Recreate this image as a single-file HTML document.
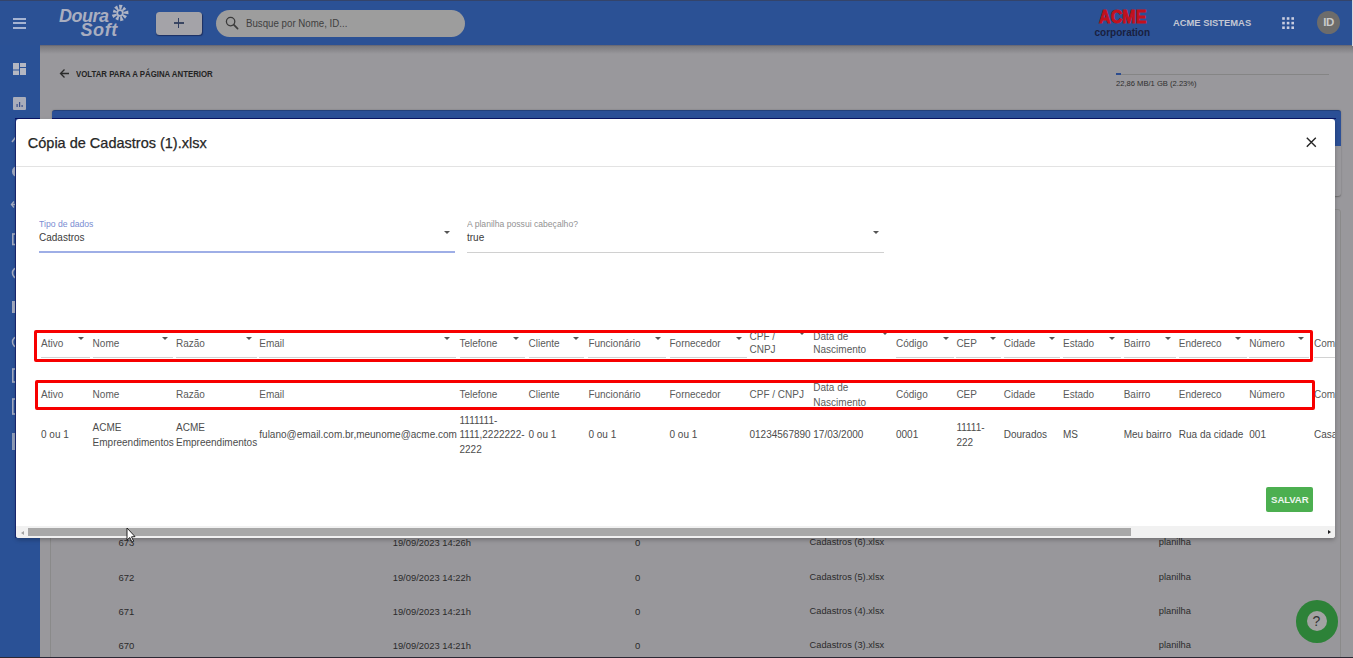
<!DOCTYPE html>
<html><head><meta charset="utf-8"><style>
*{margin:0;padding:0;box-sizing:border-box}
html,body{width:1353px;height:658px;overflow:hidden;background:#99989c;font-family:"Liberation Sans",sans-serif}
.t{position:absolute;white-space:nowrap}
#topbar{position:absolute;left:0;top:0;width:1353px;height:45px;background:#2b5195}
#topline{position:absolute;left:0;top:0;width:1353px;height:1px;background:#34446a}
#sidebar{position:absolute;left:0;top:45px;width:40px;height:613px;background:#2a5196}
#content{position:absolute;left:40px;top:45px;width:1313px;height:613px;background:#99989c}
#topshadow{position:absolute;left:40px;top:45px;width:1313px;height:9px;background:linear-gradient(#5f6070,#7b7a7e 15%,#99989c)}
.hb{position:absolute;left:13px;width:13px;height:2px;background:#a6b4d2}
.logo{font-weight:700;font-style:italic;color:#a9aec0;letter-spacing:-0.5px}
#plusbtn{position:absolute;left:156px;top:12px;width:46px;height:23px;background:#a4a3a8;border-radius:3.5px;box-shadow:0.5px 1px 1px #1c2f62}
.pl1{position:absolute;left:17.8px;top:10.3px;width:9.8px;height:1.5px;background:#3a4662}
.pl2{position:absolute;left:21.9px;top:5.9px;width:1.2px;height:10.5px;background:#2f3d60}
#search{position:absolute;left:216px;top:9.5px;width:248.5px;height:27.5px;background:#9d9d9d;border-radius:14px}
#acme{font-size:18px;line-height:20px;font-weight:700;color:#c3101c;transform:scaleX(0.896);transform-origin:left top;letter-spacing:0px;-webkit-text-stroke:0.9px #c3101c}
#avatar{position:absolute;left:1317px;top:11px;width:23.2px;height:23.2px;border-radius:50%;background:#6d6c6b;color:#cacaca;font-weight:700;font-size:11.5px;line-height:23.5px;text-align:center;letter-spacing:-0.3px}
#card1{position:absolute;left:51.5px;top:109.5px;width:1289px;height:86px;background:#99989c;border-radius:3px;box-shadow:0 0.5px 1.5px #6a6a6a}
#card1h{position:absolute;left:51.5px;top:109.5px;width:1289px;height:36px;background:#2b4f96;border-radius:3px 3px 0 0;border-top:1px solid #23407a}
#card2{position:absolute;left:49.5px;top:208.5px;width:1291px;height:460px;background:#98979b;border:1px solid #8a8a8a;border-radius:3px}
#help{position:absolute;left:1295.5px;top:600px;width:42.5px;height:42.5px;border-radius:50%;background:#2d8238}
#helpin{position:absolute;left:11px;top:11px;width:20px;height:20px;border-radius:50%;background:#a3a3a3;color:#333;font-size:14px;line-height:20px;text-align:center}
#modal{position:absolute;left:16px;top:119px;width:1319px;height:419px;background:#fff;border-radius:3px;overflow:hidden;box-shadow:0 2px 4px rgba(0,0,0,0.25)}
#mhead{position:absolute;left:0;top:46.5px;width:1319px;height:1px;background:#e3e3e3}
.arr{position:absolute;width:0;height:0;border-left:3.2px solid transparent;border-right:3.2px solid transparent;border-top:3.4px solid #555}
.rbox{position:absolute;border:3px solid #f70000;border-radius:2px}
#salvar{position:absolute;left:1250.3px;top:368.2px;width:47px;height:25.3px;background:#4caf50;border-radius:2px;color:#eef6ee;font-weight:700;font-size:9.6px;line-height:25.5px;text-align:center;letter-spacing:-0.1px}
#botline{position:absolute;left:0;top:657px;width:1353px;height:1px;background:#2b2733}
#rstrip{position:absolute;left:1351.5px;top:0;width:2px;height:45.5px;background:#d8d8e0}
#track{position:absolute;left:0;top:407px;width:1319px;height:12.5px;background:#f1f1f1}
#thumb{position:absolute;left:12px;top:408.5px;width:1103px;height:8.5px;background:#a8a8a8}
</style></head><body>
<div id="topbar"></div><div id="topline"></div><div id="sidebar"></div><div id="content"></div><div id="topshadow"></div><div class="hb" style="top:17.6px"></div><div class="hb" style="top:22.2px"></div><div class="hb" style="top:26.8px"></div><svg style="position:absolute;left:13px;top:63px" width="13" height="12" viewBox="0 0 13 12">
<rect x="0" y="0" width="6" height="6.5" fill="#b4b7c2"/><rect x="7" y="0" width="6" height="4" fill="#b4b7c2"/>
<rect x="0" y="7.5" width="6" height="4.5" fill="#b4b7c2"/><rect x="7" y="5" width="6" height="7" fill="#b4b7c2"/></svg><svg style="position:absolute;left:13px;top:97px" width="13" height="13" viewBox="0 0 13 13">
<rect x="0" y="0" width="13" height="13" rx="1" fill="#a9adba"/><rect x="3.5" y="7" width="1.2" height="3" fill="#3a4f8a"/>
<rect x="6" y="5" width="1.2" height="5" fill="#3a4f8a"/><rect x="8.5" y="8" width="1.2" height="2" fill="#3a4f8a"/></svg><svg style="position:absolute;left:0;top:120px" width="20" height="340" viewBox="0 120 20 340">
<path d="M12 142L15.5 137.5" stroke="#a3abc0" stroke-width="1.6"/>
<circle cx="17.5" cy="171.5" r="5.5" fill="#a3abc0"/>
<path d="M11.5 204.5H16M14 201.5L11.5 204.5L14 207.5" fill="none" stroke="#a3abc0" stroke-width="1.4"/>
<rect x="12.8" y="234" width="8" height="10.5" fill="none" stroke="#a3abc0" stroke-width="1.6"/>
<circle cx="18" cy="273" r="5.5" fill="none" stroke="#a3abc0" stroke-width="1.6"/>
<rect x="12" y="301" width="8" height="12" fill="#a3abc0"/>
<circle cx="18" cy="342" r="5.5" fill="none" stroke="#a3abc0" stroke-width="1.5"/>
<rect x="12.8" y="369" width="8" height="13" fill="none" stroke="#a3abc0" stroke-width="1.6"/>
<rect x="12.8" y="399" width="8" height="15" fill="none" stroke="#a3abc0" stroke-width="1.6"/>
<rect x="12" y="433" width="8" height="17" fill="#a3abc0" opacity="0.85"/>
</svg><div class="t logo" style="left:59px;top:6px;font-size:18px;line-height:20px">Doura</div><div class="t logo" style="left:80.5px;top:19.5px;font-size:18px;line-height:20px;letter-spacing:0.6px">Soft</div><svg style="position:absolute;left:109.5px;top:3.1px" width="20" height="20" viewBox="0 0 20 20"><g fill="#b0b5c4"><path d="M9.60 6.42L8.99 1.66L12.64 2.03L11.10 6.57Z"/><path d="M12.00 7.00L14.04 3.80L16.30 6.12L13.05 8.08Z"/><path d="M13.46 8.99L18.23 7.50L18.51 11.25L13.57 10.49Z"/><path d="M13.30 11.45L16.99 12.98L15.05 15.68L12.42 12.67Z"/><path d="M11.60 13.23L13.71 17.31L10.24 18.20L10.14 13.60Z"/><path d="M9.15 13.50L8.27 17.40L5.29 15.96L7.80 12.85Z"/><path d="M7.10 12.13L3.28 15.04L1.77 11.70L6.48 10.76Z"/><path d="M6.41 9.77L2.81 9.61L3.66 6.58L6.81 8.32Z"/><path d="M7.40 7.51L4.16 4.53L7.05 2.57L8.64 6.67Z"/></g><circle cx="10" cy="10" r="2.8" fill="none" stroke="#b0b5c4" stroke-width="1.8"/></svg><div id="plusbtn"><div class="pl1"></div><div class="pl2"></div></div><div id="search"></div><svg style="position:absolute;left:225px;top:16px" width="14" height="14" viewBox="0 0 14 14"><circle cx="5.6" cy="5.6" r="4.2" fill="none" stroke="#3a3a3a" stroke-width="1.3"/><line x1="8.7" y1="8.7" x2="12.6" y2="12.6" stroke="#3d3d3d" stroke-width="1.7" stroke-linecap="round"/></svg><div class="t" style="left:245.5px;top:16.55px;font-size:10px;line-height:14.5px;color:#404040;font-weight:400;transform:scaleX(0.97);transform-origin:0 0;">Busque por Nome, ID...</div>
<div class="t" id="acme" style="left:1099px;top:6.9px">ACME</div><div class="t" style="left:1094.5px;top:27.2px;font-size:10px;line-height:12px;font-weight:700;color:#19203f">corporation</div><div class="t" style="left:1173px;top:16.08px;font-size:9.4px;line-height:13.63px;color:#c3c7d3;font-weight:700;">ACME SISTEMAS</div>
<svg style="position:absolute;left:1282px;top:17px" width="12" height="12" viewBox="0 0 12 12"><rect x="0.2" y="0.2" width="2.6" height="2.6" fill="#c9cde0"/><rect x="0.2" y="4.8" width="2.6" height="2.6" fill="#c9cde0"/><rect x="0.2" y="9.399999999999999" width="2.6" height="2.6" fill="#c9cde0"/><rect x="4.8" y="0.2" width="2.6" height="2.6" fill="#c9cde0"/><rect x="4.8" y="4.8" width="2.6" height="2.6" fill="#c9cde0"/><rect x="4.8" y="9.399999999999999" width="2.6" height="2.6" fill="#c9cde0"/><rect x="9.399999999999999" y="0.2" width="2.6" height="2.6" fill="#c9cde0"/><rect x="9.399999999999999" y="4.8" width="2.6" height="2.6" fill="#c9cde0"/><rect x="9.399999999999999" y="9.399999999999999" width="2.6" height="2.6" fill="#c9cde0"/></svg><div id="avatar">ID</div><div class="t" style="left:76px;top:67.07px;font-size:9.6px;line-height:13.92px;color:#242424;font-weight:700;transform:scaleX(0.815);transform-origin:0 0;">VOLTAR PARA A PÁGINA ANTERIOR</div>
<svg style="position:absolute;left:59px;top:68px" width="11" height="11" viewBox="0 0 11 11"><path d="M10 5.5H1.8M5.5 1.5L1.5 5.5L5.5 9.5" fill="none" stroke="#2a2a2a" stroke-width="1.3"/></svg><div style="position:absolute;left:1116px;top:73.5px;width:213px;height:1.5px;background:#858585"></div><div style="position:absolute;left:1116px;top:73.3px;width:4.7px;height:2px;background:#2c4c8e"></div><div class="t" style="left:1116px;top:78.48px;font-size:7.6px;line-height:11.02px;color:#2e2e2e;font-weight:400;">22,86 MB/1 GB (2.23%)</div>
<div id="card1"></div><div id="card1h"></div><div id="card2"></div><div class="t" style="left:118.5px;top:536.17px;font-size:9.5px;line-height:13.775px;color:#2b2b2b;font-weight:400;">673</div>
<div class="t" style="left:392.7px;top:536.28px;font-size:9.4px;line-height:13.63px;color:#2b2b2b;font-weight:400;">19/09/2023 14:26h</div>
<div class="t" style="left:635px;top:536.17px;font-size:9.5px;line-height:13.775px;color:#2b2b2b;font-weight:400;">0</div>
<div class="t" style="left:809.6px;top:536.44px;font-size:9.25px;line-height:13.4125px;color:#2b2b2b;font-weight:400;">Cadastros (6).xlsx</div>
<div class="t" style="left:1158.8px;top:536.38px;font-size:9.3px;line-height:13.485000000000001px;color:#2b2b2b;font-weight:400;">planilha</div>
<div class="t" style="left:118.5px;top:570.57px;font-size:9.5px;line-height:13.775px;color:#2b2b2b;font-weight:400;">672</div>
<div class="t" style="left:392.7px;top:570.68px;font-size:9.4px;line-height:13.63px;color:#2b2b2b;font-weight:400;">19/09/2023 14:22h</div>
<div class="t" style="left:635px;top:570.57px;font-size:9.5px;line-height:13.775px;color:#2b2b2b;font-weight:400;">0</div>
<div class="t" style="left:809.6px;top:570.84px;font-size:9.25px;line-height:13.4125px;color:#2b2b2b;font-weight:400;">Cadastros (5).xlsx</div>
<div class="t" style="left:1158.8px;top:570.78px;font-size:9.3px;line-height:13.485000000000001px;color:#2b2b2b;font-weight:400;">planilha</div>
<div class="t" style="left:118.5px;top:604.77px;font-size:9.5px;line-height:13.775px;color:#2b2b2b;font-weight:400;">671</div>
<div class="t" style="left:392.7px;top:604.88px;font-size:9.4px;line-height:13.63px;color:#2b2b2b;font-weight:400;">19/09/2023 14:21h</div>
<div class="t" style="left:635px;top:604.77px;font-size:9.5px;line-height:13.775px;color:#2b2b2b;font-weight:400;">0</div>
<div class="t" style="left:809.6px;top:605.04px;font-size:9.25px;line-height:13.4125px;color:#2b2b2b;font-weight:400;">Cadastros (4).xlsx</div>
<div class="t" style="left:1158.8px;top:604.98px;font-size:9.3px;line-height:13.485000000000001px;color:#2b2b2b;font-weight:400;">planilha</div>
<div class="t" style="left:118.5px;top:638.97px;font-size:9.5px;line-height:13.775px;color:#2b2b2b;font-weight:400;">670</div>
<div class="t" style="left:392.7px;top:639.08px;font-size:9.4px;line-height:13.63px;color:#2b2b2b;font-weight:400;">19/09/2023 14:21h</div>
<div class="t" style="left:635px;top:638.97px;font-size:9.5px;line-height:13.775px;color:#2b2b2b;font-weight:400;">0</div>
<div class="t" style="left:809.6px;top:639.24px;font-size:9.25px;line-height:13.4125px;color:#2b2b2b;font-weight:400;">Cadastros (3).xlsx</div>
<div class="t" style="left:1158.8px;top:639.18px;font-size:9.3px;line-height:13.485000000000001px;color:#2b2b2b;font-weight:400;">planilha</div>
<div style="position:absolute;left:15px;top:118px;width:25px;height:1.2px;background:#0a1565"></div><div style="position:absolute;left:51.5px;top:118px;width:1284px;height:1.2px;background:#0a1565"></div><div style="position:absolute;left:15px;top:119px;width:1.2px;height:419px;background:#1a2a78"></div><div id="help"><div id="helpin">?</div></div><div id="modal"><div id="mhead"></div><div class="t" style="left:11.8px;top:13.70px;font-size:14.5px;line-height:21.025px;color:#262626;font-weight:400;-webkit-text-stroke:0.25px #262626;">Cópia de Cadastros (1).xlsx</div>
<svg style="position:absolute;left:1290.3px;top:18px" width="11" height="11" viewBox="0 0 11 11"><path d="M0.8 0.8L9.8 9.8M9.8 0.8L0.8 9.8" stroke="#262626" stroke-width="1.4"/></svg><div class="t" style="left:23px;top:98.50px;font-size:9px;line-height:13.049999999999999px;color:#7a8dd2;font-weight:400;transform:scaleX(0.96);transform-origin:0 0;">Tipo de dados</div>
<div class="t" style="left:23px;top:112.44px;font-size:10px;line-height:14.5px;color:#3c3c3c;font-weight:400;">Cadastros</div>
<div style="position:absolute;left:23px;top:131.5px;width:416px;height:2px;background:#9eaee6"></div><div class="arr" style="left:428px;top:112px"></div><div class="t" style="left:451px;top:98.50px;font-size:9px;line-height:13.049999999999999px;color:#929292;font-weight:400;transform:scaleX(0.956);transform-origin:0 0;">A planilha possui cabeçalho?</div>
<div class="t" style="left:451px;top:112.44px;font-size:10px;line-height:14.5px;color:#3c3c3c;font-weight:400;">true</div>
<div style="position:absolute;left:451px;top:132.5px;width:417px;height:1px;background:#d0d0d0"></div><div class="arr" style="left:857px;top:112px"></div><div class="t" style="left:25px;top:218.44px;font-size:10px;line-height:14.5px;color:#5a5a5a;font-weight:400;">Ativo</div>
<div style="position:absolute;left:25.0px;top:238px;width:48.6px;height:1px;background:#d2d2d2"></div><div class="arr" style="left:62.3px;top:218px"></div><div class="t" style="left:25px;top:268.94px;font-size:10px;line-height:14.5px;color:#5a5a5a;font-weight:400;">Ativo</div>
<div class="t" style="left:25px;top:309.39px;font-size:10px;line-height:14.6px;color:#4c4c4c;font-weight:400;">0 ou 1</div>
<div class="t" style="left:76.6px;top:218.44px;font-size:10px;line-height:14.5px;color:#5a5a5a;font-weight:400;">Nome</div>
<div style="position:absolute;left:76.6px;top:238px;width:80.4px;height:1px;background:#d2d2d2"></div><div class="arr" style="left:145.7px;top:218px"></div><div class="t" style="left:76.6px;top:268.94px;font-size:10px;line-height:14.5px;color:#5a5a5a;font-weight:400;">Nome</div>
<div class="t" style="left:76.6px;top:302.09px;font-size:10px;line-height:14.6px;color:#4c4c4c;font-weight:400;">ACME<br>Empreendimentos</div>
<div class="t" style="left:160px;top:218.44px;font-size:10px;line-height:14.5px;color:#5a5a5a;font-weight:400;">Razão</div>
<div style="position:absolute;left:160.0px;top:238px;width:81.0px;height:1px;background:#d2d2d2"></div><div class="arr" style="left:229.7px;top:218px"></div><div class="t" style="left:160px;top:268.94px;font-size:10px;line-height:14.5px;color:#5a5a5a;font-weight:400;">Razão</div>
<div class="t" style="left:160px;top:302.09px;font-size:10px;line-height:14.6px;color:#4c4c4c;font-weight:400;">ACME<br>Empreendimentos</div>
<div class="t" style="left:243.3px;top:218.44px;font-size:10px;line-height:14.5px;color:#5a5a5a;font-weight:400;">Email</div>
<div style="position:absolute;left:243.3px;top:238px;width:196.3px;height:1px;background:#d2d2d2"></div><div class="arr" style="left:428.3px;top:218px"></div><div class="t" style="left:243.3px;top:268.94px;font-size:10px;line-height:14.5px;color:#5a5a5a;font-weight:400;">Email</div>
<div class="t" style="left:243.3px;top:309.39px;font-size:10px;line-height:14.6px;color:#4c4c4c;font-weight:400;">fulano@email.com.br,meunome@acme.com</div>
<div class="t" style="left:443.5px;top:218.44px;font-size:10px;line-height:14.5px;color:#5a5a5a;font-weight:400;">Telefone</div>
<div style="position:absolute;left:443.5px;top:238px;width:65.0px;height:1px;background:#d2d2d2"></div><div class="arr" style="left:497.2px;top:218px"></div><div class="t" style="left:443.5px;top:268.94px;font-size:10px;line-height:14.5px;color:#5a5a5a;font-weight:400;">Telefone</div>
<div class="t" style="left:443.5px;top:294.79px;font-size:10px;line-height:14.6px;color:#4c4c4c;font-weight:400;">1111111-<br>1111,2222222-<br>2222</div>
<div class="t" style="left:512.5px;top:218.44px;font-size:10px;line-height:14.5px;color:#5a5a5a;font-weight:400;">Cliente</div>
<div style="position:absolute;left:512.5px;top:238px;width:55.5px;height:1px;background:#d2d2d2"></div><div class="arr" style="left:556.7px;top:218px"></div><div class="t" style="left:512.5px;top:268.94px;font-size:10px;line-height:14.5px;color:#5a5a5a;font-weight:400;">Cliente</div>
<div class="t" style="left:512.5px;top:309.39px;font-size:10px;line-height:14.6px;color:#4c4c4c;font-weight:400;">0 ou 1</div>
<div class="t" style="left:572.4px;top:218.44px;font-size:10px;line-height:14.5px;color:#5a5a5a;font-weight:400;">Funcionário</div>
<div style="position:absolute;left:572.4px;top:238px;width:78.0px;height:1px;background:#d2d2d2"></div><div class="arr" style="left:639.1px;top:218px"></div><div class="t" style="left:572.4px;top:268.94px;font-size:10px;line-height:14.5px;color:#5a5a5a;font-weight:400;">Funcionário</div>
<div class="t" style="left:572.4px;top:309.39px;font-size:10px;line-height:14.6px;color:#4c4c4c;font-weight:400;">0 ou 1</div>
<div class="t" style="left:653.5px;top:218.44px;font-size:10px;line-height:14.5px;color:#5a5a5a;font-weight:400;">Fornecedor</div>
<div style="position:absolute;left:653.5px;top:238px;width:77.3px;height:1px;background:#d2d2d2"></div><div class="arr" style="left:719.5px;top:218px"></div><div class="t" style="left:653.5px;top:268.94px;font-size:10px;line-height:14.5px;color:#5a5a5a;font-weight:400;">Fornecedor</div>
<div class="t" style="left:653.5px;top:309.39px;font-size:10px;line-height:14.6px;color:#4c4c4c;font-weight:400;">0 ou 1</div>
<div class="t" style="left:733.5px;top:211.39px;font-size:10px;line-height:13px;color:#5a5a5a;font-weight:400;">CPF /<br>CNPJ</div>
<div class="arr" style="left:782.7px;top:213.3px"></div><div class="t" style="left:733.5px;top:268.94px;font-size:10px;line-height:14.5px;color:#5a5a5a;font-weight:400;">CPF / CNPJ</div>
<div class="t" style="left:733.5px;top:309.39px;font-size:10px;line-height:14.6px;color:#4c4c4c;font-weight:400;">01234567890</div>
<div class="t" style="left:797.3px;top:211.39px;font-size:10px;line-height:13px;color:#5a5a5a;font-weight:400;">Data de<br>Nascimento</div>
<div class="arr" style="left:865.7px;top:213.3px"></div><div class="t" style="left:797.3px;top:260.50px;font-size:10px;line-height:15px;color:#5a5a5a;font-weight:400;">Data de<br>Nascimento</div>
<div class="t" style="left:797.3px;top:309.39px;font-size:10px;line-height:14.6px;color:#4c4c4c;font-weight:400;">17/03/2000</div>
<div class="t" style="left:880px;top:218.44px;font-size:10px;line-height:14.5px;color:#5a5a5a;font-weight:400;">Código</div>
<div style="position:absolute;left:880.0px;top:238px;width:58.0px;height:1px;background:#d2d2d2"></div><div class="arr" style="left:926.7px;top:218px"></div><div class="t" style="left:880px;top:268.94px;font-size:10px;line-height:14.5px;color:#5a5a5a;font-weight:400;">Código</div>
<div class="t" style="left:880px;top:309.39px;font-size:10px;line-height:14.6px;color:#4c4c4c;font-weight:400;">0001</div>
<div class="t" style="left:940.4px;top:218.44px;font-size:10px;line-height:14.5px;color:#5a5a5a;font-weight:400;">CEP</div>
<div style="position:absolute;left:940.4px;top:238px;width:44.6px;height:1px;background:#d2d2d2"></div><div class="arr" style="left:973.7px;top:218px"></div><div class="t" style="left:940.4px;top:268.94px;font-size:10px;line-height:14.5px;color:#5a5a5a;font-weight:400;">CEP</div>
<div class="t" style="left:940.4px;top:302.09px;font-size:10px;line-height:14.6px;color:#4c4c4c;font-weight:400;">11111-<br>222</div>
<div class="t" style="left:987.7px;top:218.44px;font-size:10px;line-height:14.5px;color:#5a5a5a;font-weight:400;">Cidade</div>
<div style="position:absolute;left:987.7px;top:238px;width:56.3px;height:1px;background:#d2d2d2"></div><div class="arr" style="left:1032.7px;top:218px"></div><div class="t" style="left:987.7px;top:268.94px;font-size:10px;line-height:14.5px;color:#5a5a5a;font-weight:400;">Cidade</div>
<div class="t" style="left:987.7px;top:309.39px;font-size:10px;line-height:14.6px;color:#4c4c4c;font-weight:400;">Dourados</div>
<div class="t" style="left:1047px;top:218.44px;font-size:10px;line-height:14.5px;color:#5a5a5a;font-weight:400;">Estado</div>
<div style="position:absolute;left:1047.0px;top:238px;width:57.5px;height:1px;background:#d2d2d2"></div><div class="arr" style="left:1093.2px;top:218px"></div><div class="t" style="left:1047px;top:268.94px;font-size:10px;line-height:14.5px;color:#5a5a5a;font-weight:400;">Estado</div>
<div class="t" style="left:1047px;top:309.39px;font-size:10px;line-height:14.6px;color:#4c4c4c;font-weight:400;">MS</div>
<div class="t" style="left:1107.7px;top:218.44px;font-size:10px;line-height:14.5px;color:#5a5a5a;font-weight:400;">Bairro</div>
<div style="position:absolute;left:1107.7px;top:238px;width:52.3px;height:1px;background:#d2d2d2"></div><div class="arr" style="left:1148.7px;top:218px"></div><div class="t" style="left:1107.7px;top:268.94px;font-size:10px;line-height:14.5px;color:#5a5a5a;font-weight:400;">Bairro</div>
<div class="t" style="left:1107.7px;top:309.39px;font-size:10px;line-height:14.6px;color:#4c4c4c;font-weight:400;">Meu bairro</div>
<div class="t" style="left:1162.8px;top:218.44px;font-size:10px;line-height:14.5px;color:#5a5a5a;font-weight:400;">Endereco</div>
<div style="position:absolute;left:1162.8px;top:238px;width:67.8px;height:1px;background:#d2d2d2"></div><div class="arr" style="left:1219.3px;top:218px"></div><div class="t" style="left:1162.8px;top:268.94px;font-size:10px;line-height:14.5px;color:#5a5a5a;font-weight:400;">Endereco</div>
<div class="t" style="left:1162.8px;top:309.39px;font-size:10px;line-height:14.6px;color:#4c4c4c;font-weight:400;">Rua da cidade</div>
<div class="t" style="left:1233.3px;top:218.44px;font-size:10px;line-height:14.5px;color:#5a5a5a;font-weight:400;">Número</div>
<div style="position:absolute;left:1233.3px;top:238px;width:60.2px;height:1px;background:#d2d2d2"></div><div class="arr" style="left:1282.2px;top:218px"></div><div class="t" style="left:1233.3px;top:268.94px;font-size:10px;line-height:14.5px;color:#5a5a5a;font-weight:400;">Número</div>
<div class="t" style="left:1233.3px;top:309.39px;font-size:10px;line-height:14.6px;color:#4c4c4c;font-weight:400;">001</div>
<div class="t" style="left:1298px;top:218.44px;font-size:10px;line-height:14.5px;color:#5a5a5a;font-weight:400;">Com</div>
<div style="position:absolute;left:1298.0px;top:238px;width:86.0px;height:1px;background:#d2d2d2"></div><div class="t" style="left:1298px;top:268.94px;font-size:10px;line-height:14.5px;color:#5a5a5a;font-weight:400;">Com</div>
<div class="t" style="left:1298px;top:309.39px;font-size:10px;line-height:14.6px;color:#4c4c4c;font-weight:400;">Casa</div>
<div class="rbox" style="left:18px;top:211px;width:1279px;height:32px"></div><div class="rbox" style="left:19px;top:261px;width:1279.5px;height:30px"></div><div id="salvar">SALVAR</div><div id="track"></div><div id="thumb"></div><div style="position:absolute;left:4.5px;top:411.5px;width:0;height:0;border-top:2.5px solid transparent;border-bottom:2.5px solid transparent;border-right:3px solid #a3a3a3"></div><div style="position:absolute;left:1311.5px;top:410.5px;width:0;height:0;border-top:2.5px solid transparent;border-bottom:2.5px solid transparent;border-left:3px solid #1e1e1e"></div></div><svg style="position:absolute;left:126px;top:527px" width="10" height="16" viewBox="0 0 10 16"><path d="M1 1L1 13L3.8 10.5L6 15L7.6 14.2L5.5 9.8L9 9.6Z" fill="#fff" stroke="#111" stroke-width="0.9"/></svg><div id="botline"></div><div id="rstrip"></div></body></html>
